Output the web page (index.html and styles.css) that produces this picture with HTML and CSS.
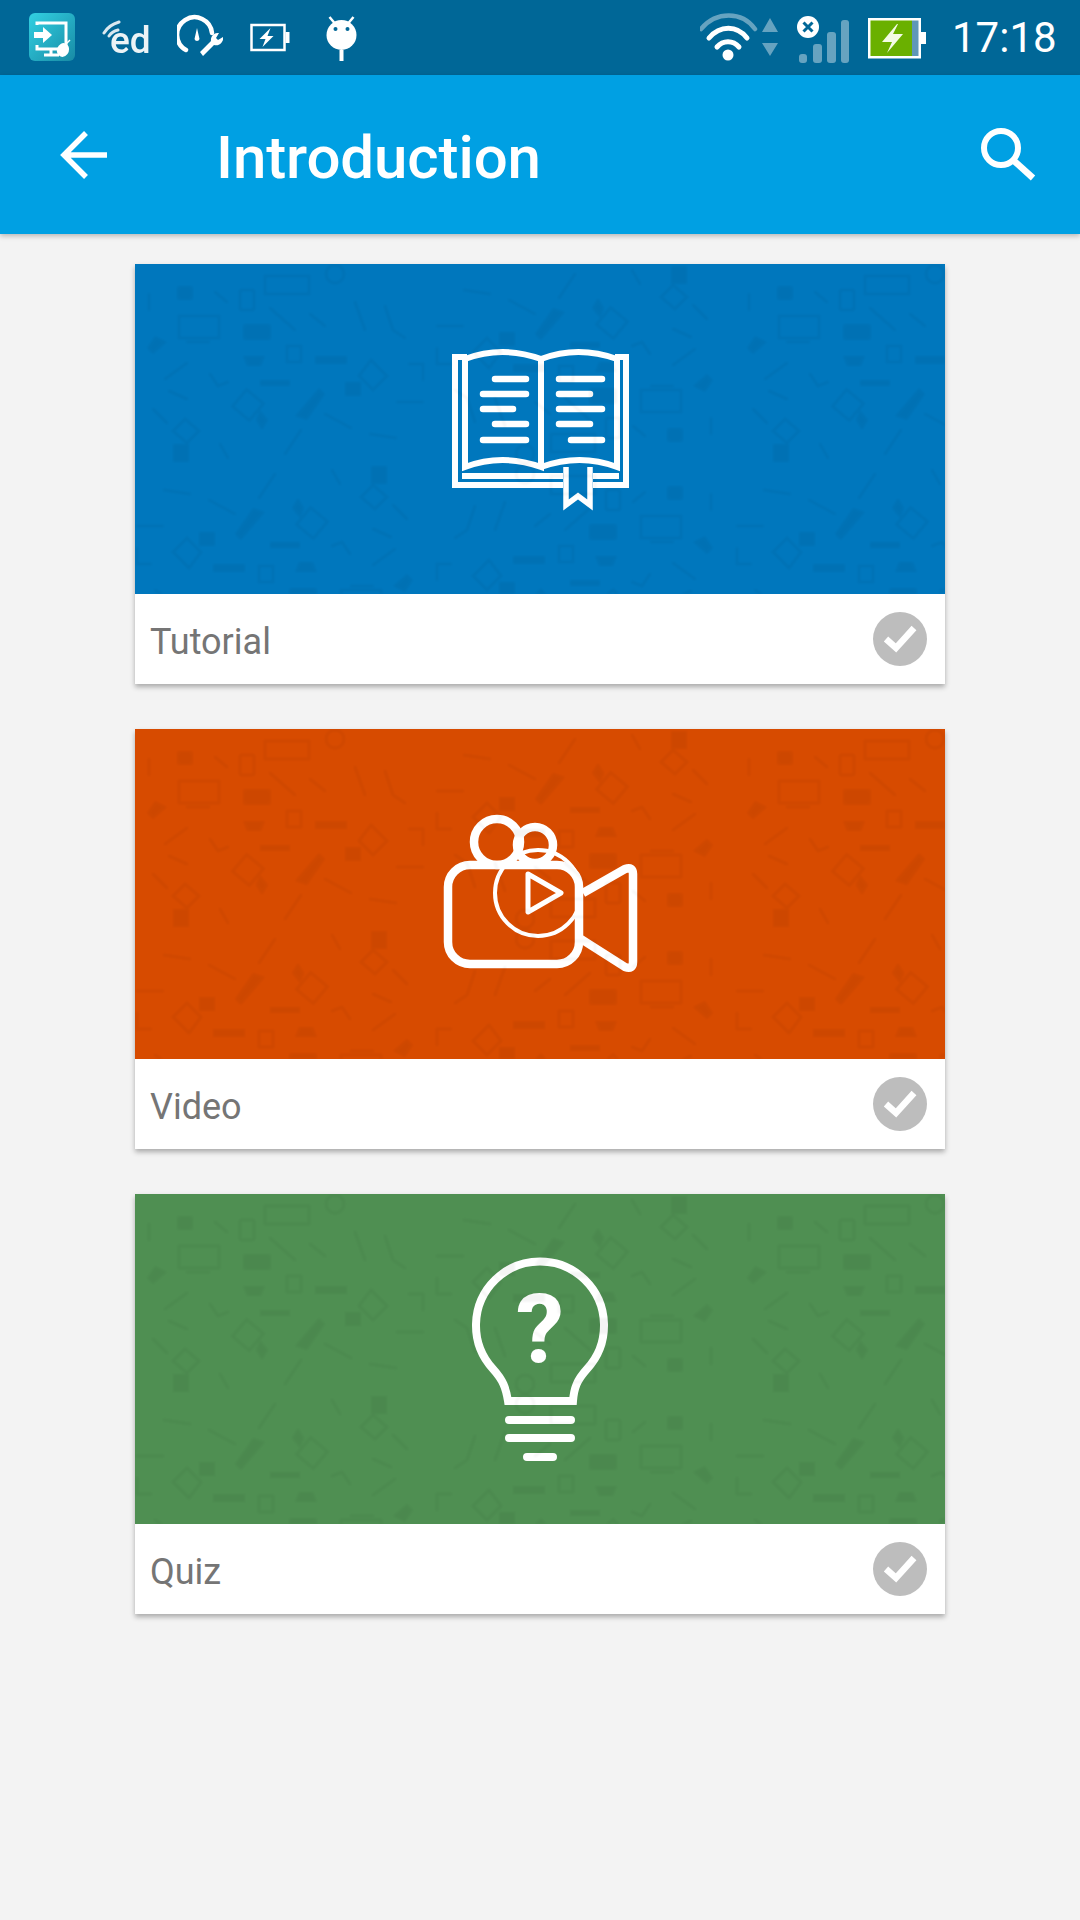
FILE: index.html
```html
<!DOCTYPE html>
<html lang="en">
<head>
  <meta charset="UTF-8">
  <title>Introduction</title>
  <link rel="stylesheet" href="styles.css">
</head>
<body>
  <!-- shared doodle texture for the card pictures -->
  <svg class="defs">
    <defs>
      <g id="doodleSet">
        <g fill="none" stroke="#000" stroke-width="2.5" stroke-linecap="round">
          <rect x="44" y="52" width="40" height="22"/>
          <path d="M52 78h22M80 28l12 10M14 30v16M30 115l22-16M34 127l18 8M18 145l14 14"/>
          <rect x="105" y="26" width="14" height="20" rx="2"/>
          <path d="M135 44l25 22M175 50l15 12M220 38l10 28M250 42l8 24l12 8"/>
          <rect x="152" y="82" width="14" height="16"/>
          <path d="M75 110l8 12l10-4M130 12h44v18h-44z"/>
          <rect x="102" y="130" width="22" height="22" transform="rotate(40 113 141)"/>
          <circle cx="200" cy="10" r="9"/>
          <path d="M236 96l16 16l-14 14l-14-14zM50 155l14 12l-12 12l-14-12z"/>
          <path d="M85 180l8 14M150 190l16-24M190 150l26 14M235 170l26 4M262 138h26M274 100h14v16"/>
        </g>
        <g fill="#000" stroke="none">
          <rect x="108" y="60" width="28" height="16" rx="3"/>
          <rect x="42" y="22" width="16" height="14" rx="3"/>
          <path d="M20 72l12 6l-14 12l-6-6zM108 92h22l-4 10h-14zM180 92h32v8h-32zM125 116h30v6h-30z"/>
          <path d="M160 152l24-28l6 6l-18 26zM210 118h16v14h-16zM125 146l8 10l-6 10l-6-10z"/>
          <rect x="38" y="180" width="16" height="18"/>
        </g>
      </g>
      <pattern id="doodles" width="600" height="400" patternUnits="userSpaceOnUse">
        <use href="#doodleSet"/>
        <use href="#doodleSet" transform="translate(590 200) rotate(180)"/>
        <use href="#doodleSet" transform="translate(290 400) scale(-1 -1)"/>
        <use href="#doodleSet" transform="translate(590 200) scale(-1 1)"/>
      </pattern>
    </defs>
  </svg>

  <div class="status-bar">
    <svg class="status-icon" viewBox="29 0 46 75">
      <defs>
        <linearGradient id="tealFill" x1="0" y1="0" x2="1" y2="1">
          <stop offset="0" stop-color="#32d0e2"/>
          <stop offset="1" stop-color="#188ba5"/>
        </linearGradient>
      </defs>
      <rect x="29" y="13" width="46" height="48" rx="6" fill="url(#tealFill)"/>
      <path d="M37 25v-2h29v26h-29v-4M51 49v5M44 55h15" fill="none" stroke="#fff" stroke-width="3"/>
      <path d="M34 32h9v-5l9 8l-9 8v-5h-9z" fill="#fff"/>
      <ellipse cx="63" cy="50" rx="6" ry="7" fill="#fff" transform="rotate(20 63 50)"/>
      <path d="M66 44l4-4" stroke="#fff" stroke-width="1.5"/>
    </svg>
    <svg class="status-icon status-icon-wide" viewBox="98 0 48 75">
      <path d="M100 33c3-5 8-9 15-11M105 36c2-3 5-5 9-6" fill="none" stroke="#fff" stroke-width="3" stroke-linecap="round" opacity=".85"/>
      <text class="ed-mark" x="106" y="53">ed</text>
    </svg>
    <svg class="status-icon" viewBox="170 0 46 75">
      <path d="M179 50a17.500 17.500 0 1 1 26-17" fill="none" stroke="#fff" stroke-width="4.500" stroke-linecap="round"/>
      <path d="M190 28l2.500 11a2.600 2.600 0 0 1-5 0z" fill="#fff"/>
      <path d="M193 52l11-11a7 7 0 0 1 8-8l-3 5l2 2l5-3a7 7 0 0 1-9 8l-11 11z" fill="#fff"/>
    </svg>
    <svg class="status-icon" viewBox="241.500 0 46 75">
      <rect x="243" y="25" width="33" height="25" fill="none" stroke="#fff" stroke-width="2.500"/>
      <rect x="277" y="32" width="4" height="11" fill="#fff"/>
      <path d="M262 28l-11 11h6l-3 8l11-11h-6z" fill="#fff"/>
    </svg>
    <svg class="status-icon" viewBox="312.500 0 46 75">
      <circle cx="331" cy="35" r="15" fill="#fff"/>
      <path d="M319 17l5 6M343 17l-5 6" stroke="#fff" stroke-width="2.500"/>
      <circle cx="325" cy="29" r="2" fill="#006797"/>
      <circle cx="337" cy="29" r="2" fill="#006797"/>
      <rect x="329" y="50" width="4" height="11" fill="#fff"/>
    </svg>

    <div class="status-right">
      <svg class="status-network" viewBox="700 0 78 75">
        <path d="M701 29c15-18 41-18 54 0" fill="none" stroke="#fff" stroke-opacity=".4" stroke-width="4.500" stroke-linecap="round"/>
        <path d="M709 38c11-13 28-13 38 0M717 47c6-7 16-7 22 0" fill="none" stroke="#fff" stroke-width="5" stroke-linecap="round"/>
        <circle cx="728" cy="55" r="5.500" fill="#fff"/>
        <path d="M770 18l8 14h-16zM762 43h16l-8 13z" fill="#fff" fill-opacity=".4"/>
      </svg>
      <svg class="status-signal" viewBox="796 0 54 75">
        <g fill="#fff" fill-opacity=".4">
          <rect x="799" y="54" width="8" height="9" rx="3"/>
          <rect x="813" y="44" width="9" height="19" rx="3"/>
          <rect x="827" y="32" width="9" height="31" rx="3"/>
          <rect x="841" y="20" width="8" height="43" rx="3"/>
        </g>
        <circle cx="808" cy="27" r="11" fill="#fff"/>
        <path d="M803.500 22.500l9 9M812.500 22.500l-9 9" stroke="#006797" stroke-width="3"/>
      </svg>
      <svg class="status-battery" viewBox="868 0 58 75">
        <rect x="870" y="20" width="49" height="36" fill="#6ab000"/>
        <rect x="912" y="20" width="7" height="36" fill="#5f97b8"/>
        <rect x="869.250" y="19.250" width="50.500" height="38" fill="none" stroke="#fff" stroke-width="2.500"/>
        <rect x="920" y="32" width="6" height="12" fill="#fff"/>
        <path d="M897 24l-15 18h10l-5 11l16-19h-10l5-10z" fill="#f4fbe6"/>
      </svg>
      <span class="clock">17:18</span>
    </div>
  </div>

  <header class="app-bar">
    <svg class="back-icon" viewBox="58 130 48 50">
      <path d="M84 133l-22 22l22 22M62 155h43" fill="none" stroke="#fff" stroke-width="5.500"/>
    </svg>
    <h1 class="app-title">Introduction</h1>
    <svg class="search-icon" viewBox="978 125 60 58">
      <circle cx="1001" cy="147" r="17" fill="none" stroke="#fff" stroke-width="6"/>
      <path d="M1013 159l20 18" fill="none" stroke="#fff" stroke-width="6.500"/>
    </svg>
  </header>

  <main class="card-list">
    <section class="card">
      <div class="card-picture picture-tutorial">
        <svg class="doodle-layer"><rect width="100%" height="100%" fill="url(#doodles)"/></svg>
        <svg class="card-art" width="240" height="190" viewBox="0 4 240 190">
          <g fill="none" stroke="#fff" stroke-width="6">
            <path d="M47 27h-12v128h108M173 155h33v-128h-11"/>
            <path d="M45 29q37-14 76 0v108q-39-14-76 0zM121 29q37-14 76 0v108q-37-14-76 0"/>
            <path d="M42 146h101M173 146h26"/>
            <path d="M146 137v38l12-9l12 9v-38" stroke-width="5.500"/>
          </g>
          <path d="M75 49h31M63 64h43M63 79h30M75 94h31M63 110h43M139 49h43M139 64h31M139 79h43M139 94h31M151 110h31" stroke="#fff" stroke-width="6.500" stroke-linecap="round"/>
        </svg>
      </div>
      <div class="card-label">
        <span class="card-name">Tutorial</span>
        <svg class="check" viewBox="0 0 54 54"><circle cx="27" cy="27" r="27" fill="#bdbdbd"/><path d="M13 27l10 9l18-20" fill="none" stroke="#fff" stroke-width="6.500"/></svg>
      </div>
    </section>

    <section class="card">
      <div class="card-picture picture-video">
        <svg class="doodle-layer"><rect width="100%" height="100%" fill="url(#doodles)"/></svg>
        <svg class="card-art" width="240" height="190" viewBox="0 9 240 190">
          <g fill="none" stroke="#fff" stroke-linejoin="round">
            <circle cx="77" cy="52" r="23" stroke-width="8.500"/>
            <circle cx="115" cy="55" r="18" stroke-width="8.500"/>
            <rect x="28" y="75" width="131" height="99" rx="22" stroke-width="8.500"/>
            <circle cx="118" cy="103" r="43" stroke-width="4"/>
            <path d="M108 84l33 19l-33 19z" stroke-width="5"/>
            <path d="M163 103l42-24q8-3 8 5v88q0 8-8 5l-44-28" stroke-width="8.500"/>
          </g>
        </svg>
      </div>
      <div class="card-label">
        <span class="card-name">Video</span>
        <svg class="check" viewBox="0 0 54 54"><circle cx="27" cy="27" r="27" fill="#bdbdbd"/><path d="M13 27l10 9l18-20" fill="none" stroke="#fff" stroke-width="6.500"/></svg>
      </div>
    </section>

    <section class="card">
      <div class="card-picture picture-quiz">
        <svg class="doodle-layer"><rect width="100%" height="100%" fill="url(#doodles)"/></svg>
        <svg class="card-art" width="200" height="240" viewBox="0 -1 200 240">
          <path d="M68 161H133C134 148 137 140 147 129A64 64 0 1 0 53 129C63 140 66 148 68 161Z" fill="none" stroke="#fff" stroke-width="8"/>
          <text class="bulb-mark" x="100" y="122">?</text>
          <path d="M69 180h62M69 198h62M87 217h26" stroke="#fff" stroke-width="8" stroke-linecap="round"/>
        </svg>
      </div>
      <div class="card-label">
        <span class="card-name">Quiz</span>
        <svg class="check" viewBox="0 0 54 54"><circle cx="27" cy="27" r="27" fill="#bdbdbd"/><path d="M13 27l10 9l18-20" fill="none" stroke="#fff" stroke-width="6.500"/></svg>
      </div>
    </section>
  </main>
</body>
</html>
```

FILE: styles.css
```css
body {
  margin: 0;
  width: 1080px;
  height: 1920px;
  overflow: hidden;
  background-color: #f3f3f3;
  font-family: Roboto, "Liberation Sans", sans-serif;
}
.defs {
  display: block;
  width: 0;
  height: 0;
}
.status-bar {
  display: flex;
  align-items: center;
  gap: 27px;
  height: 75px;
  padding-left: 29px;
  background-color: #006797;
}
.status-icon {
  width: 46px;
  height: 75px;
}
.status-icon-wide {
  width: 48px;
}
.ed-mark {
  font-family: Roboto, sans-serif;
  font-size: 37px;
  font-weight: 500;
  fill: #fff;
  opacity: .92;
}
.status-right {
  display: flex;
  align-items: center;
  gap: 18px;
  margin-left: auto;
}
.status-network {
  width: 78px;
  height: 75px;
}
.status-signal {
  width: 54px;
  height: 75px;
}
.status-battery {
  width: 58px;
  height: 75px;
}
.clock {
  width: 136px;
  padding-left: 8px;
  box-sizing: border-box;
  font-size: 42px;
  font-weight: 400;
  color: #fff;
}
.app-bar {
  display: flex;
  align-items: center;
  height: 159px;
  padding-left: 60px;
  background-color: #00a0e3;
  box-shadow: 0 2px 5px rgba(0, 0, 0, .25);
}
.back-icon {
  width: 48px;
  height: 50px;
}
.app-title {
  margin: 5px 0 0 108px;
  font-size: 60px;
  font-weight: 500;
  letter-spacing: -.1px;
  color: #fff;
}
.search-icon {
  width: 60px;
  height: 58px;
  margin-left: auto;
  margin-right: 42px;
}
.card-list {
  display: flex;
  flex-direction: column;
  gap: 45px;
  width: 810px;
  margin: 30px auto 0;
}
.card {
  background-color: #fff;
  box-shadow: 0 3px 5px rgba(0, 0, 0, .3);
}
.card-picture {
  display: grid;
  place-items: center;
  height: 330px;
  overflow: hidden;
}
.card-picture svg {
  grid-area: 1 / 1;
}
.doodle-layer {
  width: 100%;
  height: 100%;
  opacity: .04;
  filter: blur(1px);
}
.picture-tutorial {
  background-color: #0077bd;
}
.picture-video {
  background-color: #d74b00;
}
.picture-quiz {
  background-color: #4f8f52;
}
.bulb-mark {
  font-family: Roboto, sans-serif;
  font-size: 97px;
  font-weight: 700;
  fill: #fff;
  text-anchor: middle;
}
.card-label {
  display: flex;
  align-items: center;
  justify-content: space-between;
  height: 90px;
  padding: 0 18px 0 15px;
}
.card-name {
  margin-top: 5px;
  font-size: 36px;
  color: #757575;
}
.check {
  width: 54px;
  height: 54px;
}
```
